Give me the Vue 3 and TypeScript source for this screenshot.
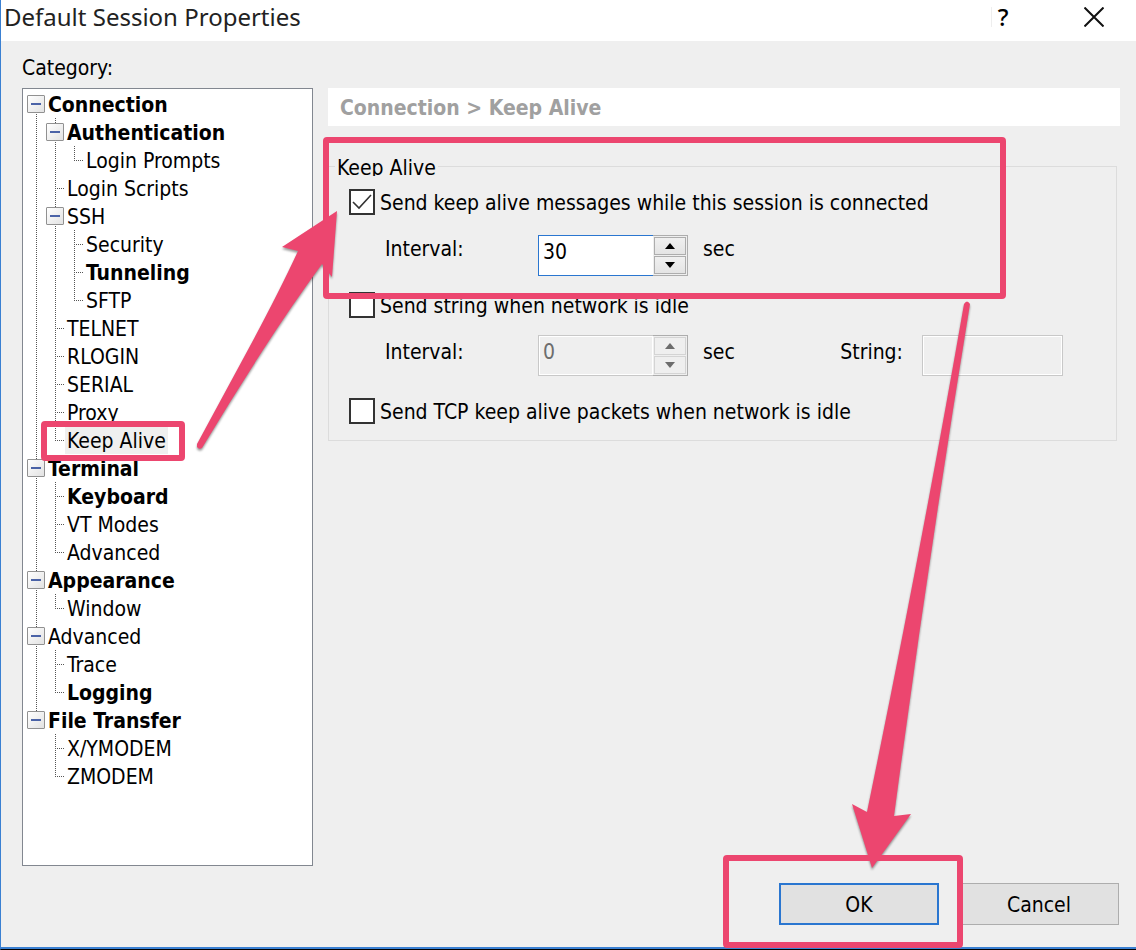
<script setup lang="ts">
import { computed, ref } from 'vue'

interface TreeNode {
  id: string
  label: string
  bold?: boolean
  children?: TreeNode[]
}

interface TreeRow {
  node: TreeNode
  depth: number
  guides: boolean[]
  first: boolean
  last: boolean
}

const categories: TreeNode[] = [
  {
    id: 'connection', label: 'Connection', bold: true, children: [
      {
        id: 'authentication', label: 'Authentication', bold: true,
        children: [{ id: 'login-prompts', label: 'Login Prompts' }],
      },
      { id: 'login-scripts', label: 'Login Scripts' },
      {
        id: 'ssh', label: 'SSH', children: [
          { id: 'security', label: 'Security' },
          { id: 'tunneling', label: 'Tunneling', bold: true },
          { id: 'sftp', label: 'SFTP' },
        ],
      },
      { id: 'telnet', label: 'TELNET' },
      { id: 'rlogin', label: 'RLOGIN' },
      { id: 'serial', label: 'SERIAL' },
      { id: 'proxy', label: 'Proxy' },
      { id: 'keep-alive', label: 'Keep Alive' },
    ],
  },
  {
    id: 'terminal', label: 'Terminal', bold: true, children: [
      { id: 'keyboard', label: 'Keyboard', bold: true },
      { id: 'vt-modes', label: 'VT Modes' },
      { id: 'terminal-advanced', label: 'Advanced' },
    ],
  },
  {
    id: 'appearance', label: 'Appearance', bold: true,
    children: [{ id: 'window', label: 'Window' }],
  },
  {
    id: 'advanced', label: 'Advanced', children: [
      { id: 'trace', label: 'Trace' },
      { id: 'logging', label: 'Logging', bold: true },
    ],
  },
  {
    id: 'file-transfer', label: 'File Transfer', bold: true, children: [
      { id: 'xymodem', label: 'X/YMODEM' },
      { id: 'zmodem', label: 'ZMODEM' },
    ],
  },
]

const selected = ref('keep-alive')
const collapsed = ref<string[]>([])

function toggle(id: string) {
  collapsed.value = collapsed.value.includes(id)
    ? collapsed.value.filter((c) => c !== id)
    : [...collapsed.value, id]
}

function flatten(nodes: TreeNode[], depth: number, guides: boolean[]): TreeRow[] {
  return nodes.flatMap((node, i) => {
    const last = i === nodes.length - 1
    const row: TreeRow = { node, depth, guides, first: depth === 0 && i === 0, last }
    const open = node.children && !collapsed.value.includes(node.id)
    return open ? [row, ...flatten(node.children!, depth + 1, [...guides, !last])] : [row]
  })
}

const rows = computed(() => flatten(categories, 0, []))

const sendMessages = ref(true)
const sendString = ref(false)
const sendTcp = ref(false)
const messageInterval = ref(30)
const stringInterval = ref(0)
const idleString = ref('')
</script>

<template>
  <main class="dialog">
    <header class="titlebar">
      <h1>Default Session Properties</h1>
      <button class="caption help" type="button" aria-label="Help">?</button>
      <button class="caption close" type="button" aria-label="Close">
        <svg width="20" height="20" viewBox="0 0 20 20"><path d="M0.5 0.5 19.5 19.5M19.5 0.5 0.5 19.5" /></svg>
      </button>
    </header>

    <div class="content">
      <p id="category-label" class="category">Category:</p>

      <ul class="tree" role="tree" aria-labelledby="category-label">
        <li
          v-for="row in rows"
          :key="row.node.id"
          class="row"
          role="treeitem"
          :aria-level="row.depth + 1"
          :aria-selected="selected === row.node.id"
        >
          <span v-for="(on, i) in row.guides" :key="i" class="cell" :class="{ line: on }"></span>
          <span class="cell stub" :class="{ line: !row.first && !row.last, top: row.last, bottom: row.first }">
            <button
              v-if="row.node.children"
              class="expander"
              type="button"
              :aria-label="'Toggle ' + row.node.label"
              @click="toggle(row.node.id)"
            ></button>
          </span>
          <button
            class="node"
            :class="{ bold: row.node.bold, selected: selected === row.node.id }"
            type="button"
            @click="selected = row.node.id"
          >{{ row.node.label }}</button>
        </li>
      </ul>

      <section class="page">
        <h2>Connection &gt; Keep Alive</h2>
        <fieldset>
          <legend>Keep Alive</legend>

          <label class="check">
            <input v-model="sendMessages" type="checkbox" />
            <span>Send keep alive messages while this session is connected</span>
          </label>
          <div class="fields">
            <label class="name" for="message-interval">Interval:</label>
            <div class="spinner">
              <input id="message-interval" v-model="messageInterval" type="text" />
              <div class="steps">
                <button type="button" aria-label="Increase interval" @click="messageInterval++">
                  <svg width="10" height="6" viewBox="0 0 10 6"><path d="M5 0 10 6H0Z" /></svg>
                </button>
                <button type="button" aria-label="Decrease interval" @click="messageInterval--">
                  <svg width="10" height="6" viewBox="0 0 10 6"><path d="M0 0H10L5 6Z" /></svg>
                </button>
              </div>
            </div>
            <span class="unit">sec</span>
          </div>

          <label class="check">
            <input v-model="sendString" type="checkbox" />
            <span>Send string when network is idle</span>
          </label>
          <div class="fields second">
            <label class="name" for="string-interval">Interval:</label>
            <div class="spinner" :class="{ off: !sendString }">
              <input id="string-interval" v-model="stringInterval" type="text" :disabled="!sendString" />
              <div class="steps">
                <button type="button" aria-label="Increase idle interval" :disabled="!sendString" @click="stringInterval++">
                  <svg width="10" height="6" viewBox="0 0 10 6"><path d="M5 0 10 6H0Z" /></svg>
                </button>
                <button type="button" aria-label="Decrease idle interval" :disabled="!sendString" @click="stringInterval--">
                  <svg width="10" height="6" viewBox="0 0 10 6"><path d="M0 0H10L5 6Z" /></svg>
                </button>
              </div>
            </div>
            <span class="unit">sec</span>
            <label class="string-name" for="idle-string">String:</label>
            <input id="idle-string" v-model="idleString" class="string" type="text" :disabled="!sendString" />
          </div>

          <label class="check">
            <input v-model="sendTcp" type="checkbox" />
            <span>Send TCP keep alive packets when network is idle</span>
          </label>
        </fieldset>
      </section>
    </div>

    <footer>
      <button class="action primary" type="button">OK</button>
      <button class="action" type="button">Cancel</button>
    </footer>

    <svg class="marks" width="1136" height="950" viewBox="0 0 1136 950" aria-hidden="true">
      <g class="arrows">
        <path d="M337 211 332 277 322 264Q292 305 263 350 232 398 202 448 199 450 197 447V444L250 346Q280 290 298 251L282 247Z" />
        <path d="M872 868 852 804 867 812Q922 545 964 304 967 299 970 304 928 560 894 816L911 814Z" />
      </g>
      <g class="frames">
        <rect x="44" y="424" width="138" height="34" rx="1" />
        <rect x="326" y="140" width="677" height="156" rx="1" />
        <rect x="726" y="858" width="234" height="87" rx="1" />
      </g>
    </svg>
  </main>
</template>

<style>
body {
  margin: 0;
}
</style>

<style scoped>
.dialog {
  position: relative;
  box-sizing: border-box;
  display: flex;
  flex-direction: column;
  min-height: 100vh;
  overflow: hidden;
  border-left: 1px solid #3a80d2;
  border-bottom: 1px solid #000;
  box-shadow: inset 0 -2px #3a80d2;
  background: #efefef;
  color: #000;
  font-family: "DejaVu Sans Condensed", "DejaVu Sans", sans-serif;
  font-size: 21px;
  line-height: 28px;
}

button,
input {
  margin: 0;
  padding: 0;
  border: 0;
  border-radius: 0;
  background: none;
  color: inherit;
  font: inherit;
}

.titlebar {
  display: flex;
  align-items: center;
  height: 41px;
  padding-right: 19px;
  background: #fff;
}

h1 {
  flex: 1;
  margin: 0;
  padding: 0 0 8px 3px;
  color: #222;
  font: 24px/32px "Noto Sans", "Open Sans", sans-serif;
}

.caption {
  display: flex;
  align-items: center;
  justify-content: center;
  height: 20px;
  margin-bottom: 7px;
}

.help {
  width: 23px;
  border-left: 1px solid #eee;
  font: 500 24px/20px "Noto Sans", "Open Sans", sans-serif;
}

.close {
  width: 46px;
  margin-left: 57px;
}

.close path {
  fill: none;
  stroke: #111;
  stroke-width: 2;
}

.content {
  flex: 1;
  display: grid;
  grid-template-columns: 291px minmax(0, 1fr);
  grid-template-rows: 34px 1fr;
  column-gap: 15px;
  padding: 13px 16px 17px 21px;
}

.category {
  grid-column: 1 / -1;
  margin: 0;
}

.tree {
  margin: 0;
  padding: 1px 4px;
  border: 1px solid #828790;
  background: #fff;
  list-style: none;
}

.row {
  display: flex;
  height: 28px;
}

.cell {
  position: relative;
  flex: none;
  width: 19px;
}

.cell::before {
  content: "";
  position: absolute;
  left: 9px;
  width: 1px;
  background: repeating-linear-gradient(#555 0 1px, transparent 1px 2px);
}

.line::before {
  top: 0;
  bottom: 0;
}

.top::before {
  top: 0;
  height: 15px;
}

.bottom::before {
  top: 14px;
  bottom: 0;
}

.stub::after {
  content: "";
  position: absolute;
  top: 14px;
  left: 9px;
  width: 9px;
  height: 1px;
  background: repeating-linear-gradient(90deg, #555 0 1px, transparent 1px 2px);
}

.expander {
  position: absolute;
  z-index: 1;
  top: 5px;
  left: 0;
  width: 18px;
  height: 18px;
  border: 1px solid #919191;
  border-radius: 1px;
  background:
    linear-gradient(#4b63a7, #4b63a7) center / 10px 2px no-repeat,
    linear-gradient(135deg, #fff, #e2e2e2);
}

.node {
  padding: 2px 2px 0;
  line-height: 26px;
  white-space: nowrap;
}

.bold {
  font-weight: 700;
}

.selected {
  background: #efefef;
}

h2 {
  margin: 0 0 30px;
  padding: 6px 12px 4px;
  background: #fff;
  color: #a0a0a0;
  font-size: 21px;
  font-weight: 700;
  line-height: 28px;
}

fieldset {
  min-width: 0;
  margin: 0 3px 0 0;
  padding: 13px 20px 16px;
  border: 1px solid #dcdcdc;
}

legend {
  height: 20px;
  margin-left: -14px;
  padding: 0 2px;
  overflow: hidden;
  line-height: 24px;
}

.check {
  display: flex;
  align-items: center;
  gap: 5px;
  height: 26px;
}

.check span {
  padding-top: 2px;
}

.check input {
  appearance: none;
  flex: none;
  width: 26px;
  height: 26px;
  border: 2px solid #333;
  background: #fff;
}

.check input:checked {
  background: #fff url("data:image/svg+xml,%3Csvg xmlns='http://www.w3.org/2000/svg' viewBox='0 0 22 22'%3E%3Cpath d='M2 11 8 17 20 4' fill='none' stroke='%23333' stroke-width='1.6'/%3E%3C/svg%3E");
}

.fields {
  display: flex;
  align-items: flex-start;
  padding: 20px 33px 16px 36px;
}

.second {
  padding: 17px 33px 22px 36px;
}

.second > label,
.second > .unit {
  padding-top: 3px;
}

.name {
  flex: none;
  width: 153px;
}

.spinner {
  box-sizing: border-box;
  flex: none;
  display: flex;
  width: 150px;
  height: 41px;
  border: 1px solid #adadad;
}

.spinner input {
  flex: 1;
  min-width: 0;
  margin: -1px 0 -1px -1px;
  padding: 0 4px 8px;
  border: 1px solid #2a76d0;
  border-right: 0;
  background: #fff;
}

.steps {
  display: grid;
  gap: 1px;
  width: 32px;
  padding: 1px;
}

.steps button {
  display: flex;
  align-items: center;
  justify-content: center;
  border: 1px solid #adadad;
  background: linear-gradient(#f0f0f0, #e4e4e4);
}

.off input {
  border-color: #c8c8c8;
  background: #efefef;
  box-shadow: inset 0 0 0 1px #fff;
  color: #6d6d6d;
}

.off .steps button {
  border-color: #d4d4d4;
  background: #efefef;
}

.off path {
  fill: #6d6d6d;
}

.unit {
  margin-left: 15px;
}

.string-name {
  margin-left: auto;
}

.string {
  box-sizing: border-box;
  width: 141px;
  height: 41px;
  margin-left: 19px;
  padding: 0 4px;
  border: 1px solid #c8c8c8;
  box-shadow: inset 0 0 0 1px #fff;
}

footer {
  display: flex;
  justify-content: flex-end;
  gap: 20px;
  padding: 0 17px 24px;
}

.action {
  box-sizing: border-box;
  width: 160px;
  height: 42px;
  padding-top: 2px;
  border: 1px solid #adadad;
  background: #e1e1e1;
}

.primary {
  border: 2px solid #2a76d0;
}

.marks {
  position: absolute;
  z-index: 2;
  top: 0;
  left: -1px;
  pointer-events: none;
}

.frames {
  fill: none;
  stroke: #ec466f;
  stroke-width: 6;
  stroke-linejoin: round;
}

.arrows {
  fill: #ec466f;
  filter: drop-shadow(0 2px 1px rgb(0 0 0 / 40%));
}
</style>
